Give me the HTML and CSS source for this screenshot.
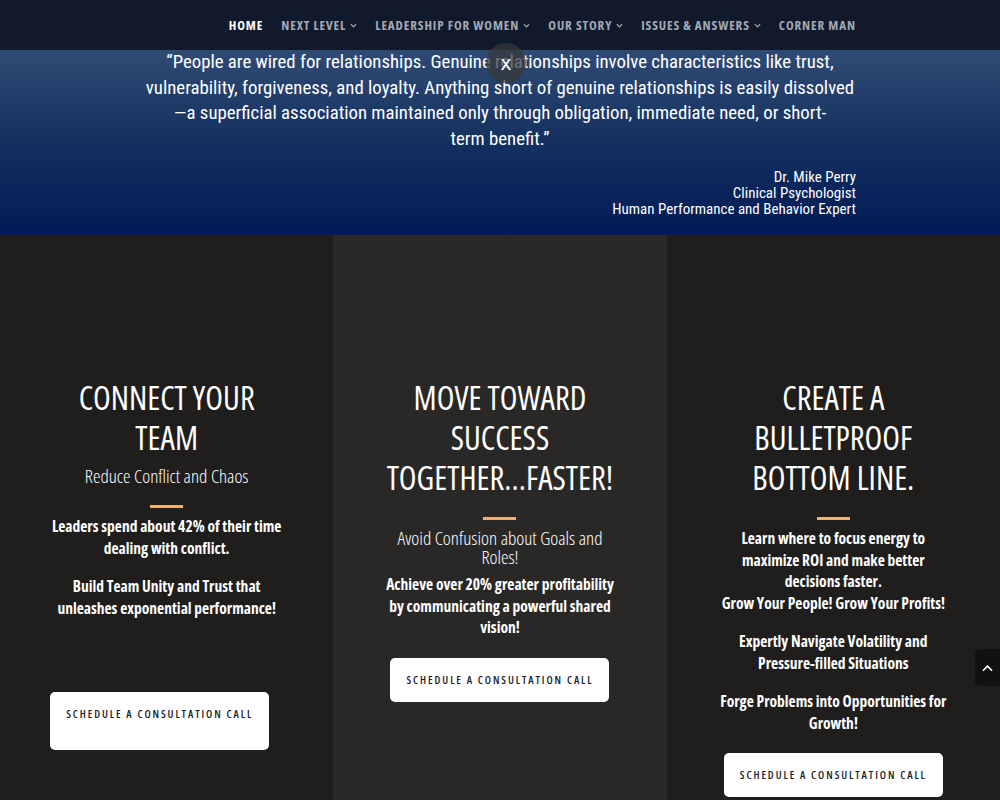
FILE: index.html
```html
<!DOCTYPE html>
<html lang="en">
<head>
<meta charset="utf-8">
<title>Leadership</title>
<link rel="stylesheet" href="styles.css">
</head>
<body>
<header class="nav">
  <nav class="nav-inner">
    <a class="nav-link active">HOME</a>
    <a class="nav-link">NEXT LEVEL<svg class="caret" viewBox="0 0 8 5"><path d="M1 1l3 3 3-3"/></svg></a>
    <a class="nav-link">LEADERSHIP FOR WOMEN<svg class="caret" viewBox="0 0 8 5"><path d="M1 1l3 3 3-3"/></svg></a>
    <a class="nav-link">OUR STORY<svg class="caret" viewBox="0 0 8 5"><path d="M1 1l3 3 3-3"/></svg></a>
    <a class="nav-link">ISSUES &amp; ANSWERS<svg class="caret" viewBox="0 0 8 5"><path d="M1 1l3 3 3-3"/></svg></a>
    <a class="nav-link">CORNER MAN</a>
  </nav>
</header>

<section class="quote">
  <div class="quote-inner">
    <p class="quote-text">“People are wired for relationships. Genuine relationships involve characteristics like trust,<br>vulnerability, forgiveness, and loyalty. Anything short of genuine relationships is easily dissolved<br>—a superficial association maintained only through obligation, immediate need, or short-<br>term benefit.”</p>
    <p class="attrib">Dr. Mike Perry<br>Clinical Psychologist<br>Human Performance and Behavior Expert</p>
  </div>
</section>

<button class="close-btn" aria-label="close">x</button>

<main class="cols">
  <div class="col col-dark">
    <h2 class="col-title">CONNECT YOUR<br>TEAM</h2>
    <p class="col-sub">Reduce Conflict and Chaos</p>
    <div class="divider"></div>
    <p class="col-text">Leaders spend about 42% of their time<br>dealing with conflict.</p>
    <p class="col-text">Build Team Unity and Trust that<br>unleashes exponential performance!</p>
    <p class="col-text">&nbsp;</p>
    <a class="btn btn-tall btn-shift">SCHEDULE A CONSULTATION CALL</a>
  </div>
  <div class="col col-mid">
    <h2 class="col-title">MOVE TOWARD<br>SUCCESS<br>TOGETHER...FASTER!</h2>
    <div class="divider"></div>
    <p class="col-sub col-sub-tight">Avoid Confusion about Goals and<br>Roles!</p>
    <p class="col-text col-text-near">Achieve over 20% greater profitability<br>by communicating a powerful shared<br>vision!</p>
    <a class="btn">SCHEDULE A CONSULTATION CALL</a>
  </div>
  <div class="col col-dark">
    <h2 class="col-title">CREATE A<br>BULLETPROOF<br>BOTTOM LINE.</h2>
    <div class="divider"></div>
    <p class="col-text">Learn where to focus energy to<br>maximize ROI and make better<br>decisions faster.<br>Grow Your People! Grow Your Profits!</p>
    <p class="col-text">Expertly Navigate Volatility and<br>Pressure-filled Situations</p>
    <p class="col-text">Forge Problems into Opportunities for<br>Growth!</p>
    <a class="btn">SCHEDULE A CONSULTATION CALL</a>
  </div>
</main>

<a class="to-top" aria-label="back to top"><svg viewBox="0 0 12 8"><path d="M1 7l5-5 5 5"/></svg></a>
</body>
</html>
```
FILE: styles.css
```css
* { box-sizing: border-box; }
html, body { margin: 0; padding: 0; }
body {
  background: #1f1e1d;
  color: #fff;
  font-family: "Open Sans", "DejaVu Sans", sans-serif;
  overflow: hidden;
  height: 800px;
}

/* NAV */
.nav {
  height: 50px;
  background: #111a2d;
}
.nav-inner {
  width: 712px;
  margin: 0 auto;
  height: 50px;
  display: flex;
  justify-content: flex-end;
  align-items: center;
  gap: 18px;
}
.nav-link {
  font-family: "Open Sans", sans-serif;
  font-stretch: 75%;
  font-weight: 700;
  font-size: 13px;
  letter-spacing: 0.9px;
  color: #a3a9b4;
  display: flex;
  align-items: center;
  white-space: nowrap;
}
.nav-link.active { color: #ffffff; }
.caret {
  width: 7px;
  height: 5px;
  margin-left: 4px;
  fill: none;
  stroke: #a3a9b4;
  stroke-width: 1.4;
}

/* QUOTE */
.quote {
  background: linear-gradient(180deg, #2f4b74 0%, #14305f 50%, #011a57 100%);
  padding: 0 0 18px;
}
.quote-inner {
  width: 712px;
  margin: 0 auto;
}
.quote-text {
  margin: 0;
  text-align: center;
  white-space: nowrap;
  font-family: "Roboto Condensed", "Open Sans", sans-serif;
  font-stretch: 75%;
  font-size: 18.8px;
  line-height: 25.5px;
  color: #ffffff;
}
.attrib {
  margin: 17px 0 0;
  text-align: right;
  font-family: "Roboto Condensed", "Open Sans", sans-serif;
  font-stretch: 75%;
  font-size: 15px;
  line-height: 16px;
  color: #ffffff;
}

.close-btn {
  position: absolute;
  left: 486px;
  top: 43px;
  width: 40px;
  height: 40px;
  border-radius: 50%;
  border: 0;
  background: rgba(55, 55, 58, 0.72);
  color: #fff;
  font-family: "Liberation Sans", Arial, sans-serif;
  font-size: 21px;
  line-height: 40px;
  padding: 0;
  text-align: center;
}

/* COLUMNS */
.cols {
  display: flex;
}
.col {
  flex: 1 1 0;
  display: flex;
  flex-direction: column;
  align-items: center;
  text-align: center;
  padding: 143px 10px 0;
  min-height: 565px;
}
.col-dark { background: #1f1e1d; }
.col-mid { background: #292827; }

.col-title {
  margin: 0;
  font-family: "Open Sans", sans-serif;
  font-stretch: 75%;
  font-weight: 400;
  font-size: 32.5px;
  line-height: 40px;
  color: #fff;
  white-space: nowrap;
}
.col-sub {
  margin: 8px 0 0;
  font-family: "Open Sans", sans-serif;
  font-stretch: 75%;
  font-weight: 300;
  font-size: 19px;
  line-height: 20px;
  color: #fff;
  white-space: nowrap;
}
.col-sub-tight {
  margin-top: 1px;
  line-height: 18.5px;
}
.divider {
  width: 33px;
  height: 3px;
  background: #f2b06c;
  margin: 19px 0 8px;
}
.col-text {
  margin: 0 0 17px;
  font-family: "Open Sans", sans-serif;
  font-stretch: 75%;
  font-weight: 700;
  font-size: 15.5px;
  line-height: 21.5px;
  color: #fff;
  white-space: nowrap;
}
.col-text-near { margin-top: 8px; }

.btn {
  display: block;
  width: 219px;
  height: 44px;
  margin-top: 2px;
  background: #fff;
  border-radius: 5px;
  color: #1b1d2b;
  font-family: "Open Sans", sans-serif;
  font-stretch: 75%;
  font-weight: 600;
  font-size: 11px;
  letter-spacing: 1.9px;
  line-height: 44px;
  text-align: center;
  white-space: nowrap;
}
.btn-tall {
  height: 58px;
}
.btn-shift {
  margin-top: 17px;
  margin-left: -14px;
}

/* BACK TO TOP */
.to-top {
  position: fixed;
  right: 0;
  top: 649px;
  width: 25px;
  height: 37px;
  background: #111111;
  border-radius: 5px 0 0 5px;
  display: flex;
  align-items: center;
  justify-content: center;
}
.to-top svg {
  width: 11px;
  height: 8px;
  fill: none;
  stroke: #fff;
  stroke-width: 1.8;
}
```
